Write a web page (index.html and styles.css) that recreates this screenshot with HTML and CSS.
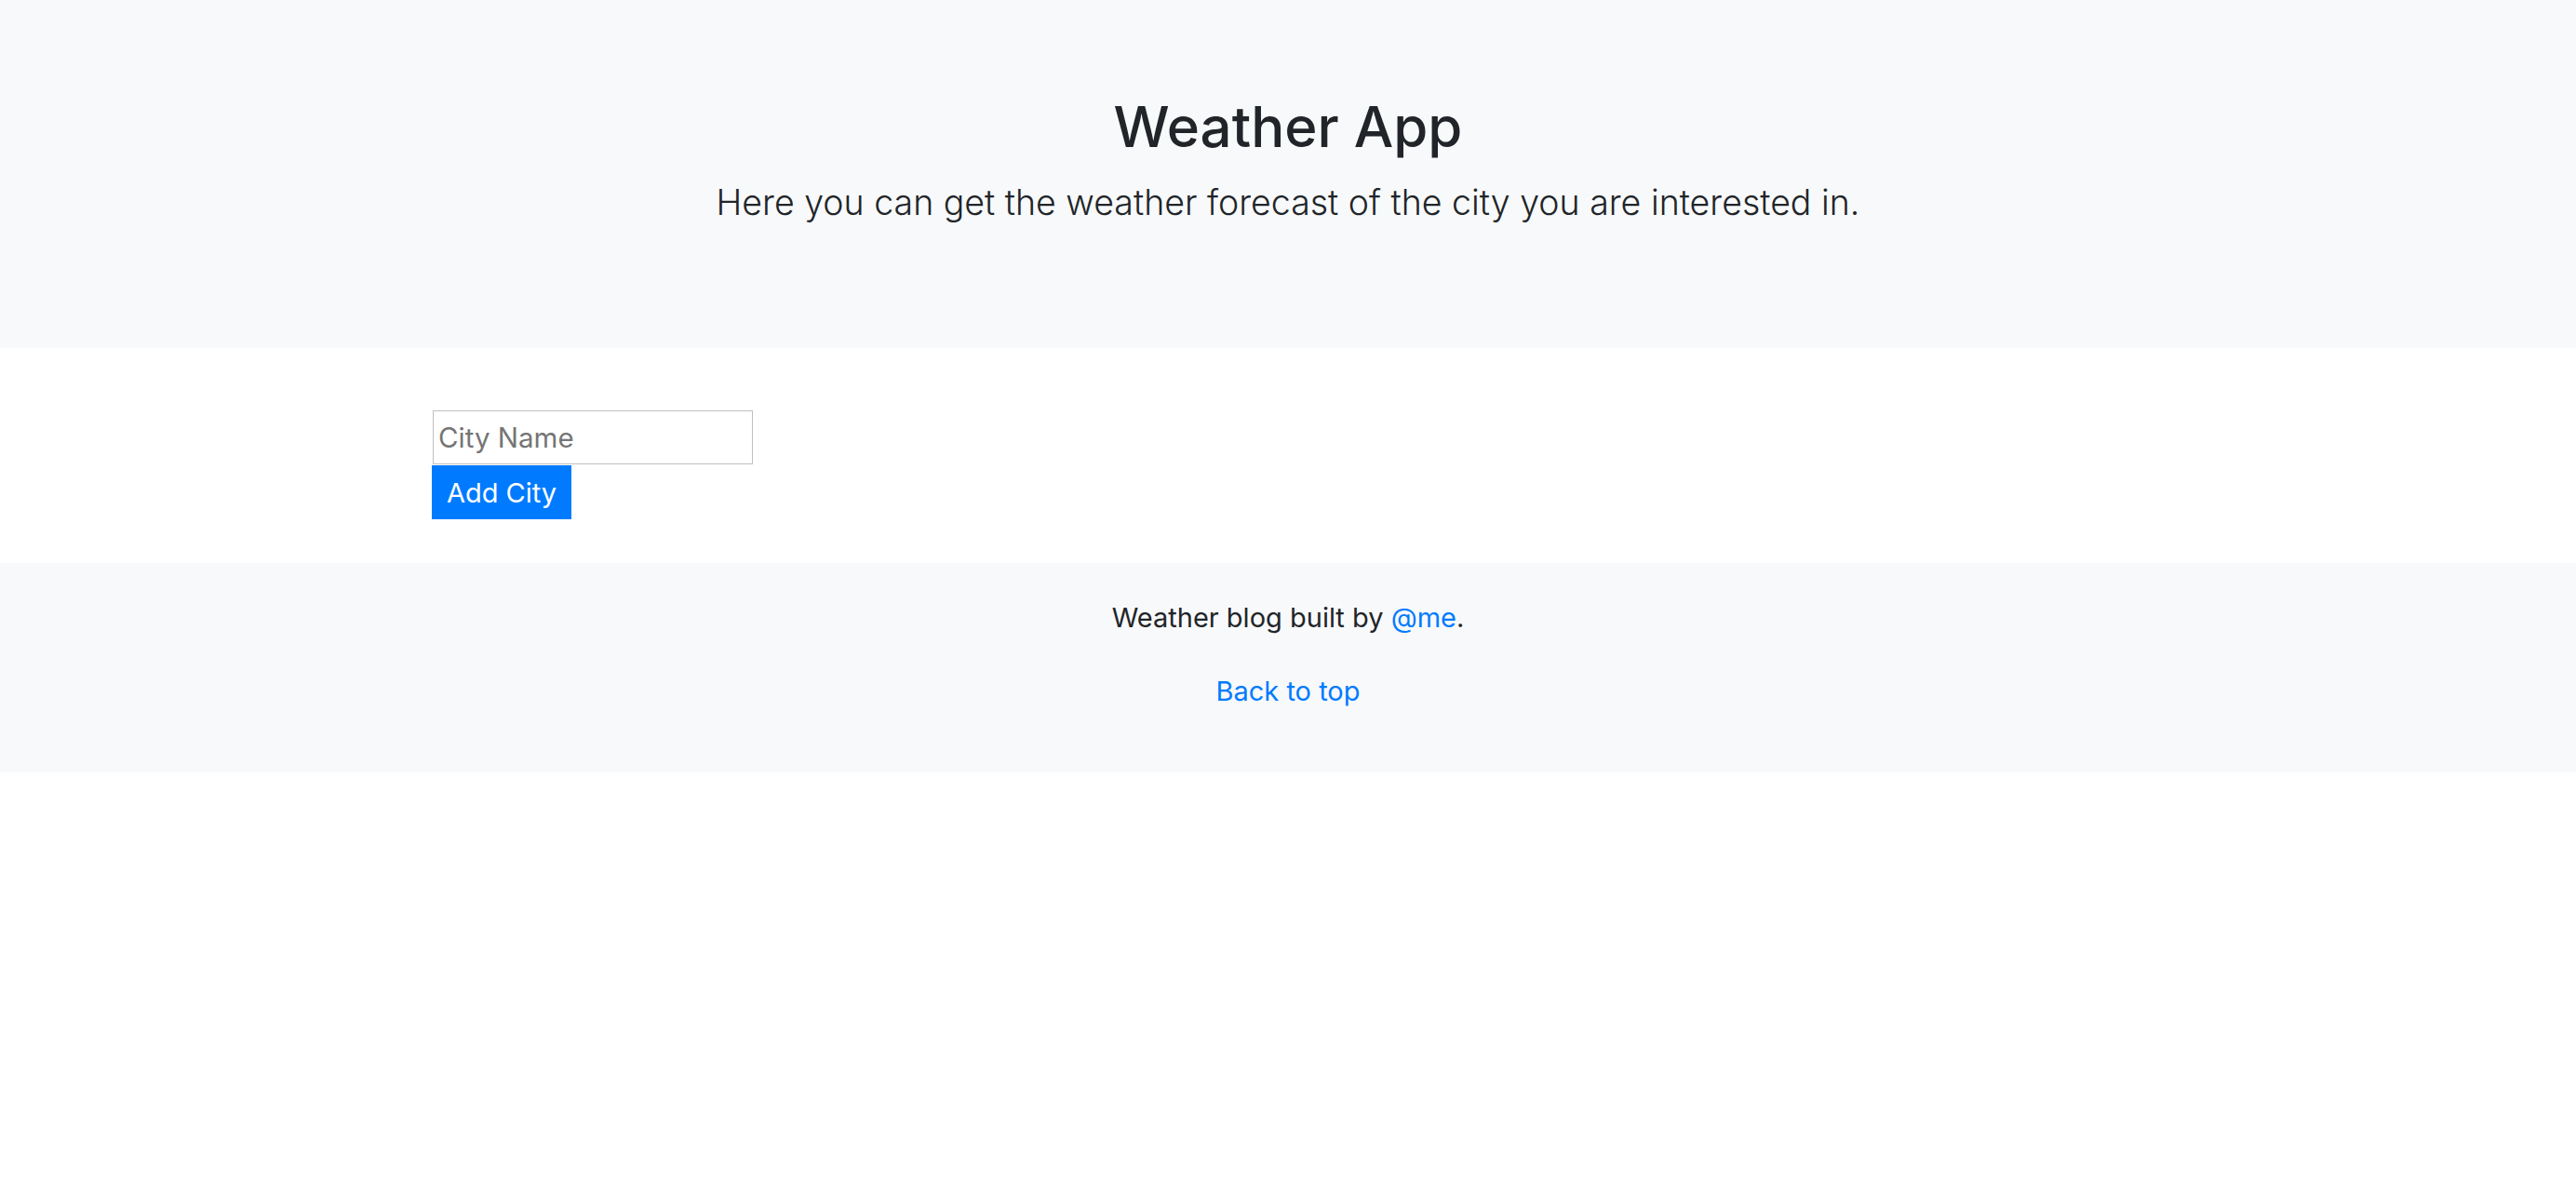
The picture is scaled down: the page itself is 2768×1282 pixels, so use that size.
FILE: index.html
```html
<!DOCTYPE html>
<html lang="en">
<head>
<meta charset="utf-8">
<title>Weather App</title>
<link rel="stylesheet" href="styles.css">
</head>
<body>
<header class="jumbo">
  <h1 class="jumbo-title">Weather App</h1>
  <p class="jumbo-lead">Here you can get the weather forecast of the city you are interested in.</p>
</header>
<main class="main">
  <form class="city-form">
    <input class="city-input" type="text" placeholder="City Name">
    <button class="city-btn" type="button">Add City</button>
  </form>
</main>
<footer class="foot">
  <p class="foot-line">Weather blog built by <a class="link" href="#">@me</a>.</p>
  <p class="foot-line foot-top"><a class="link" href="#">Back to top</a></p>
</footer>
</body>
</html>
```

FILE: styles.css
```css
* { box-sizing: border-box; }
html, body { margin: 0; padding: 0; }
body {
  font-family: Inter, "Noto Sans", sans-serif;
  color: #212529;
  background: #ffffff;
}
.jumbo {
  background: #f8f9fa;
  height: 374px;
  padding-top: 100px;
  text-align: center;
}
.jumbo-title {
  margin: 0 0 16px;
  font-size: 60px;
  font-weight: 500;
  line-height: 72px;
}
.jumbo-lead {
  margin: 0;
  font-size: 37.5px;
  font-weight: 300;
  line-height: 60px;
}
.main {
  padding: 67px 0 47px 464px;
}
.city-form {
  display: flex;
  flex-direction: column;
  align-items: flex-start;
  gap: 1px;
}
.city-input {
  margin: 0 0 0 1px;
  width: 344px;
  height: 58px;
  border: 1px solid #bfbfbf;
  padding: 0 5px;
  font-family: Inter, "Noto Sans", sans-serif;
  font-size: 29.5px;
  color: #212529;
  background: #fff;
  outline: none;
}
.city-input::placeholder { color: #757575; }
.city-btn {
  margin: 0;
  width: 150px;
  height: 58px;
  border: 0;
  padding: 0;
  background: #007bff;
  color: #fff;
  font-family: Inter, "Noto Sans", sans-serif;
  font-size: 29px;
}
.foot {
  background: #f8f9fa;
  height: 225px;
  padding-top: 37px;
  text-align: center;
}
.foot-line {
  margin: 0;
  font-size: 29px;
  line-height: 1.5;
}
.foot-top { margin-top: 35px; }
.link { color: #007bff; text-decoration: none; }
```
